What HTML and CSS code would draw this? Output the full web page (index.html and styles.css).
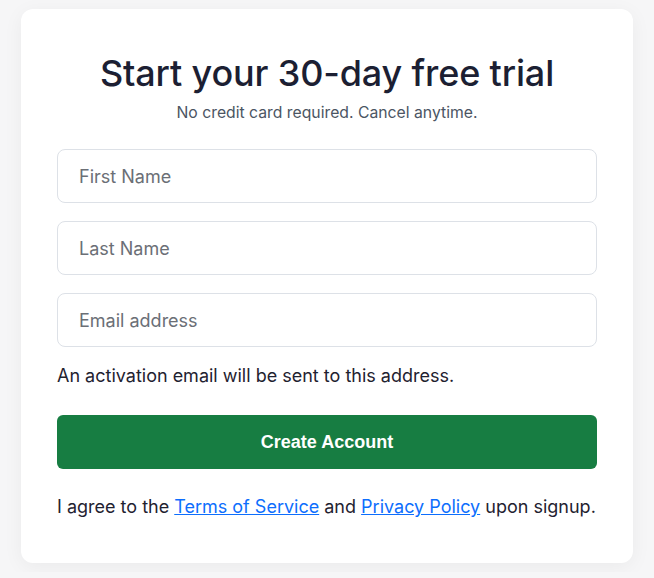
FILE: index.html
```html
<!DOCTYPE html>
<html lang="en">
<head>
<meta charset="utf-8">
<title>Start your 30-day free trial</title>
<link rel="stylesheet" href="styles.css">
</head>
<body>
<main class="card">
  <h1 class="title">Start your 30-day free trial</h1>
  <p class="subtitle">No credit card required. Cancel anytime.</p>
  <form class="form">
    <input class="field" type="text" placeholder="First Name">
    <input class="field" type="text" placeholder="Last Name">
    <input class="field" type="email" placeholder="Email address">
    <p class="hint">An activation email will be sent to this address.</p>
    <button class="submit" type="button">Create Account</button>
    <p class="terms">I agree to the <a href="#">Terms of Service</a> and <a href="#">Privacy Policy</a> upon signup.</p>
  </form>
</main>
</body>
</html>
```

FILE: styles.css
```css
* { box-sizing: border-box; }
html, body { margin: 0; padding: 0; }
body {
  background: #f6f6f7;
  font-family: Inter, "Noto Sans", sans-serif;
  color: #1f2937;
  padding: 9px 21px;
}
.card {
  background: #ffffff;
  border-radius: 12px;
  box-shadow: 0 4px 20px rgba(0, 0, 0, 0.05);
  padding: 42px 36px 45px;
}
.title {
  margin: 0;
  text-align: center;
  font-size: 36px;
  font-weight: 500;
  line-height: 44px;
  letter-spacing: -0.15px;
  color: #1c1f33;
}
.subtitle {
  margin: 8px 0 0;
  text-align: center;
  font-size: 15.75px;
  line-height: 20px;
  color: #4b5563;
}
.form {
  display: flex;
  flex-direction: column;
  margin-top: 26px;
}
.field {
  height: 54px;
  border: 1px solid #dde1e7;
  border-radius: 8px;
  padding: 0 21px;
  font-family: Inter, "Noto Sans", sans-serif;
  font-size: 18px;
  color: #1f2937;
  margin-bottom: 18px;
  outline: none;
}
.field::placeholder { color: #6b6f76; }
.hint {
  margin: 0;
  font-size: 18px;
  line-height: 22px;
  color: #1f2230;
}
.submit {
  margin-top: 28px;
  height: 54px;
  border: none;
  border-radius: 6px;
  background: #177d42;
  color: #ffffff;
  font-family: "Liberation Sans", Arial, sans-serif;
  font-weight: 700;
  font-size: 18px;
}
.terms {
  margin: 27px 0 0;
  font-size: 18px;
  line-height: 22px;
  color: #1f2230;
}
.terms a { color: #0d6efd; }
```
